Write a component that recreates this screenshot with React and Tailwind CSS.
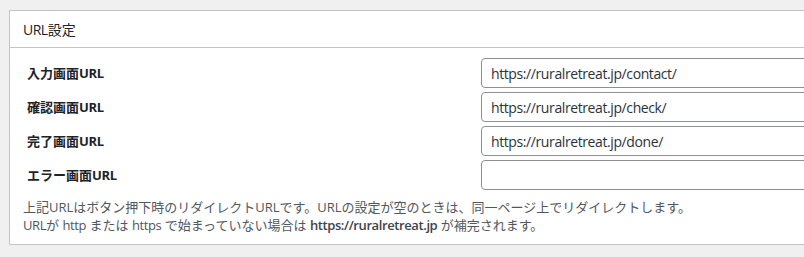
import React from 'react';

const rows = [
  { label: '入力画面URL', value: 'https://ruralretreat.jp/contact/' },
  { label: '確認画面URL', value: 'https://ruralretreat.jp/check/' },
  { label: '完了画面URL', value: 'https://ruralretreat.jp/done/' },
  { label: 'エラー画面URL', value: '' },
];

const font = { fontFamily: '"Open Sans", "Noto Sans CJK JP", sans-serif' };

export default function App() {
  return (
    <div className="w-[804px] h-[257px] overflow-hidden bg-[#f0f0f1] pt-[10px] pl-[9px]" style={font}>
      <div className="w-[820px] h-[235px] bg-white border border-[#c3c4c7]">
        <div className="h-[37px] border-b border-[#c3c4c7] flex items-center pl-[13px]">
          <h2 className="text-[14px] text-[#1d2327]">
            <span className="tracking-[-0.5px]">URL</span>設定
          </h2>
        </div>
        <div className="pt-[10px] pl-[13px]">
          <div className="flex flex-col gap-[4px]">
            {rows.map((row) => (
              <div key={row.label} className="flex items-center">
                <div className="w-[458px] shrink-0 pl-[4px] pt-[1px] text-[13px] font-bold text-[#1d2327]">
                  {row.label.replace('URL', '')}
                  <span className="tracking-[-0.3px]">URL</span>
                </div>
                <input
                  type="text"
                  readOnly
                  value={row.value}
                  className="w-[400px] shrink-0 h-[30px] px-[9px] text-[14px] tracking-[-0.4px] text-[#2c3338] border border-[#8c8f94] rounded-[4px] outline-none"
                  style={font}
                />
              </div>
            ))}
          </div>
          <p className="mt-[8px] text-[13px] leading-[18px] text-[#50575e]">
            上記URLはボタン押下時のリダイレクトURLです。URLの設定が空のときは、同一ページ上でリダイレクトします。
            <br />
            <span className="tracking-[-0.4px]">URL</span>が <span className="tracking-[-0.4px]">http</span> または{' '}
            <span className="tracking-[-0.4px]">https</span> で始まっていない場合は{' '}
            <strong className="font-semibold tracking-[-0.4px] text-[#3c434a]">https://ruralretreat.jp</strong> が補完されます。
          </p>
        </div>
      </div>
    </div>
  );
}
